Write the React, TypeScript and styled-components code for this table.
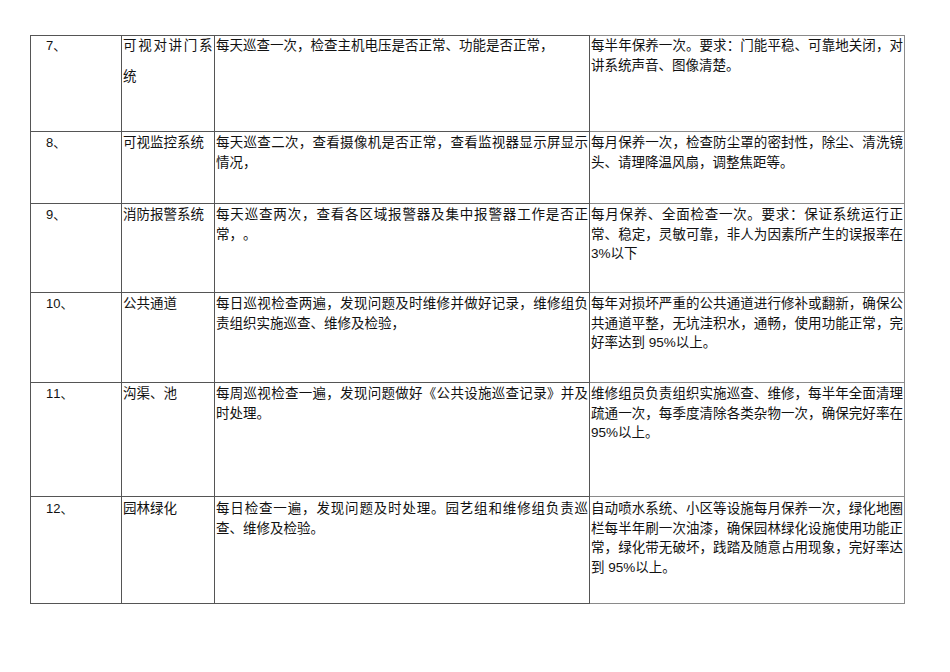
import React from "react";
import styled, { createGlobalStyle } from "styled-components";

const Global = createGlobalStyle`
  html, body { margin: 0; padding: 0; background: #ffffff; }
  body { font-family: "Liberation Sans", "Noto Sans CJK SC", sans-serif; color: #111; }
`;

const Page = styled.div`
  width: 950px;
  min-height: 672px;
  box-sizing: border-box;
  padding: 35px 0 0 30px;
`;

const Table = styled.table`
  width: 874px;
  border-collapse: collapse;
  table-layout: fixed;
`;

const Row = styled.tr<{ $h: number }>`
  height: ${(p) => p.$h}px;
`;

const Cell = styled.td<{ $pl?: number; $pt?: number; $light?: boolean }>`
  border: 1px solid ${(p) => (p.$light ? "#8a8a8a" : "#555")};
  vertical-align: top;
  padding: ${(p) => p.$pt ?? 1}px 1px 0 ${(p) => p.$pl ?? 1}px;
  font-family: "Liberation Sans", "Noto Sans CJK SC", sans-serif;
  font-size: 13.5px;
  line-height: 19.5px;
  text-align: justify;
  line-break: strict;
  word-break: break-all;
  text-spacing-trim: space-all;
  font-kerning: none;
  font-feature-settings: "halt" 0, "palt" 0;
`;

const NumText = styled.span`
  font-family: "Liberation Sans", "Noto Sans CJK SC", sans-serif;
  font-size: 13px;
`;

const SpreadLine = styled.span`
  display: block;
  text-align: justify;
  text-align-last: justify;
  letter-spacing: 0.5px;
`;

const LooseLine = styled.span`
  display: block;
  margin-top: 11px;
`;

type R = { no: string; name: React.ReactNode; check: string; keep: string; h: number; pt: number };

const rows: R[] = [
  {
    no: "7、",
    name: (
      <>
        <SpreadLine>可视对讲门系</SpreadLine>
        <LooseLine>统</LooseLine>
      </>
    ),
    check: "每天巡查一次，检查主机电压是否正常、功能是否正常，",
    keep: "每半年保养一次。要求：门能平稳、可靠地关闭，对讲系统声音、图像清楚。",
    h: 96,
    pt: 0,
  },
  {
    no: "8、",
    name: "可视监控系统",
    check: "每天巡查二次，查看摄像机是否正常，查看监视器显示屏显示情况，",
    keep: "每月保养一次，检查防尘罩的密封性，除尘、清洗镜头、请理降温风扇，调整焦距等。",
    h: 72,
    pt: 1,
  },
  {
    no: "9、",
    name: "消防报警系统",
    check: "每天巡查两次，查看各区域报警器及集中报警器工作是否正常，。",
    keep: "每月保养、全面检查一次。要求：保证系统运行正常、稳定，灵敏可靠，非人为因素所产生的误报率在3%以下",
    h: 89,
    pt: 1,
  },
  {
    no: "10、",
    name: "公共通道",
    check: "每日巡视检查两遍，发现问题及时维修并做好记录，维修组负责组织实施巡查、维修及检验，",
    keep: "每年对损坏严重的公共通道进行修补或翻新，确保公共通道平整，无坑洼积水，通畅，使用功能正常，完好率达到 95%以上。",
    h: 90,
    pt: 1,
  },
  {
    no: "11、",
    name: "沟渠、池",
    check: "每周巡视检查一遍，发现问题做好《公共设施巡查记录》并及时处理。",
    keep: "维修组员负责组织实施巡查、维修，每半年全面清理疏通一次，每季度清除各类杂物一次，确保完好率在95%以上。",
    h: 114,
    pt: 1,
  },
  {
    no: "12、",
    name: "园林绿化",
    check: "每日检查一遍，发现问题及时处理。园艺组和维修组负责巡查、维修及检验。",
    keep: "自动喷水系统、小区等设施每月保养一次，绿化地圈栏每半年刷一次油漆，确保园林绿化设施使用功能正常，绿化带无破坏，践踏及随意占用现象，完好率达到 95%以上。",
    h: 107,
    pt: 2,
  },
];

export default function App() {
  return (
    <Page>
      <Global />
      <Table>
        <colgroup>
          <col style={{ width: 91 }} />
          <col style={{ width: 93 }} />
          <col style={{ width: 375 }} />
          <col style={{ width: 315 }} />
        </colgroup>
        <tbody>
          {rows.map((r) => (
            <Row key={r.no} $h={r.h}>
              <Cell $pl={15} $pt={r.pt}>
                <NumText>{r.no}</NumText>
              </Cell>
              <Cell $pt={r.pt}>{r.name}</Cell>
              <Cell $pt={r.pt}>{r.check}</Cell>
              <Cell $pt={r.pt} $light>
                {r.keep}
              </Cell>
            </Row>
          ))}
        </tbody>
      </Table>
    </Page>
  );
}
